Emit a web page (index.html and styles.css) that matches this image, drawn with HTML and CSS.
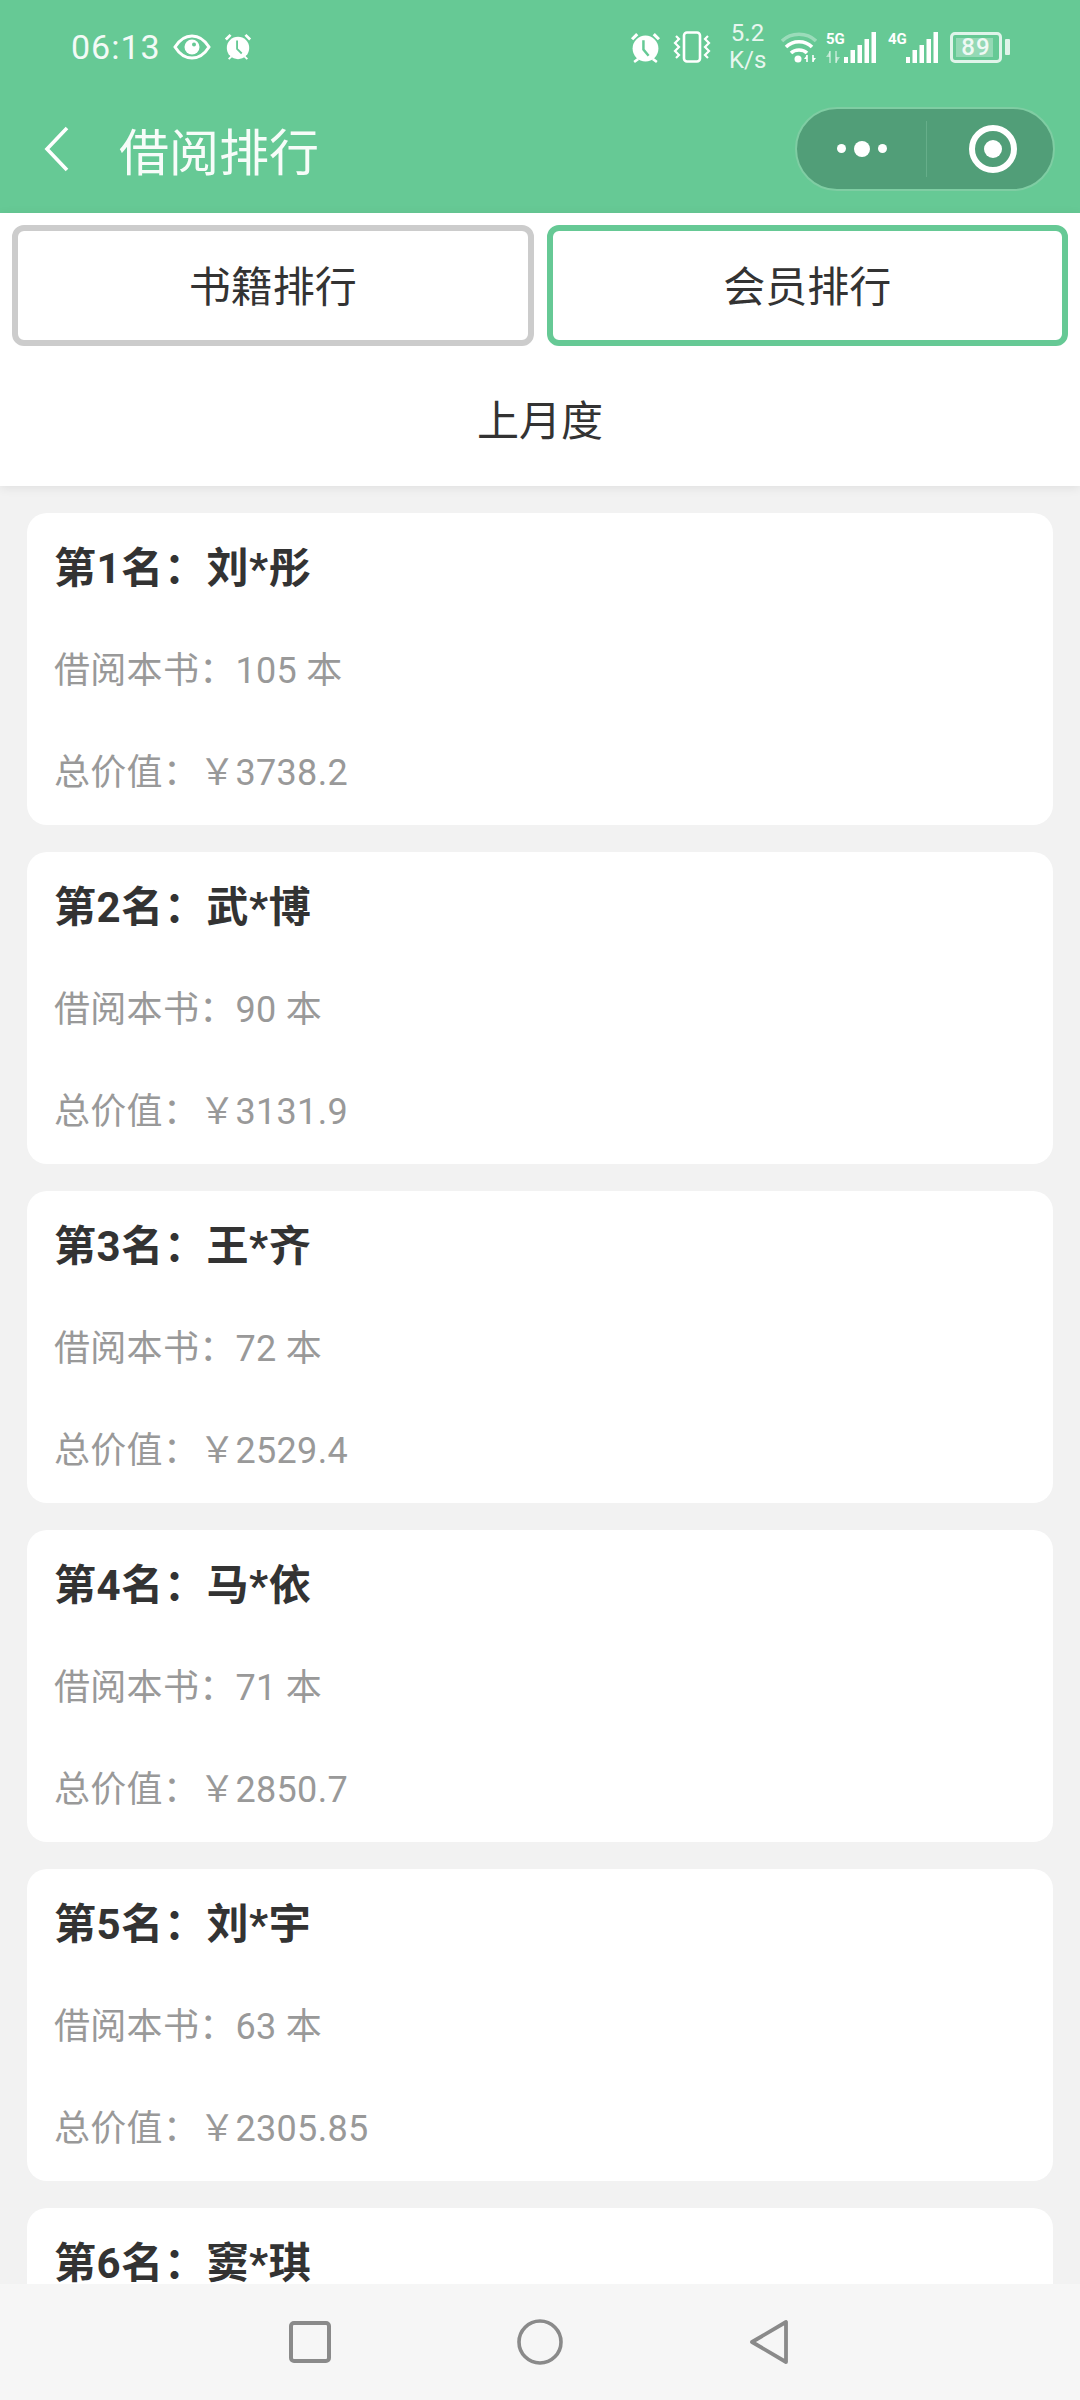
FILE: index.html
```html
<!DOCTYPE html>
<html lang="zh-CN">
<head>
    <meta charset="UTF-8">
    <meta name="viewport" content="width=device-width, initial-scale=1.0">
    <title>借阅排行</title>
    <link rel="stylesheet" href="styles.css">
</head>
<body>
    <div class="page">
        <!-- header -->
        <header class="header">
            <div class="status-bar">
                <span class="time">06:13</span>
                <svg class="ic-eye" viewBox="0 0 38 26" fill="none">
                    <path d="M2 13C7 5 13 2 19 2s12 3 17 11c-5 8-11 11-17 11S7 21 2 13z" stroke="#fff" stroke-width="3"/>
                    <circle cx="19" cy="13" r="7.5" fill="#fff"/>
                    <circle cx="21" cy="10.5" r="2" fill="#66c995"/>
                </svg>
                <svg class="ic-alarm-left" viewBox="0 0 30 30">
                    <circle cx="15" cy="16" r="12" fill="#fff"/>
                    <path d="M2 7l5-5M28 7l-5-5" stroke="#fff" stroke-width="3" fill="none"/>
                    <path d="M5 28l3-3M25 28l-3-3" stroke="#fff" stroke-width="2" fill="none"/>
                    <path d="M14 8v9l5 5" stroke="#66c995" stroke-width="2" fill="none"/>
                </svg>

                <div class="status-right">
                    <svg class="ic-alarm" viewBox="0 0 30 30">
                        <circle cx="15" cy="16" r="12.5" fill="#fff"/>
                        <path d="M2 7l5-5M28 7l-5-5" stroke="#fff" stroke-width="3" fill="none"/>
                        <path d="M4 29l4-3M26 29l-4-3" stroke="#fff" stroke-width="2.5" fill="none"/>
                        <path d="M13 8v9l5 6" stroke="#66c995" stroke-width="2.4" fill="none"/>
                    </svg>
                    <svg class="ic-vibrate" viewBox="0 0 38 32" fill="none" stroke="#fff">
                        <rect x="11" y="1.5" width="16" height="29" rx="3" stroke-width="2.6"/>
                        <path d="M3 5l3 3-4 4 4 4-4 4 4 4-3 3M35 5l-3 3 4 4-4 4 4 4-4 4 3 3" stroke-width="2.2"/>
                    </svg>
                    <div class="net-speed">5.2<br>K/s</div>
                    <svg class="ic-wifi" viewBox="0 0 36 32" fill="none">
                        <path d="M1 10C10 1 26 1 35 10" stroke="#fff" stroke-opacity=".35" stroke-width="3.5"/>
                        <path d="M5 16c7-7 19-7 26 0" stroke="#fff" stroke-width="3.5"/>
                        <path d="M10 22c4-4 12-4 16 0" stroke="#fff" stroke-width="3.5"/>
                        <circle cx="17" cy="28" r="3.5" fill="#fff"/>
                        <path d="M26 24v7M32 24v7" stroke="#fff" stroke-width="1.6"/>
                        <path d="M26 24l-3 4h3zM32 31l3-4h-3z" fill="#fff"/>
                    </svg>
                    <div class="signal signal-5g">
                        <div class="signal-info">
                            <span class="signal-label">5G</span>
                            <svg class="ic-arrows" viewBox="0 0 14 12">
                                <path d="M4 0v12M10 0v12" stroke="#fff" stroke-opacity=".5" stroke-width="1.8"/>
                                <path d="M4 0L0 6h4zM10 12l4-6h-4z" fill="#fff" fill-opacity=".5"/>
                            </svg>
                        </div>
                        <svg class="ic-bars" viewBox="0 0 32 32" fill="#fff">
                            <rect x="0" y="26" width="4" height="6"/>
                            <rect x="6.5" y="19" width="4.5" height="13"/>
                            <rect x="13.5" y="14" width="4.5" height="18"/>
                            <rect x="20.5" y="8" width="4.5" height="24"/>
                            <rect x="27.5" y="1" width="4.5" height="31"/>
                        </svg>
                    </div>
                    <div class="signal signal-4g">
                        <div class="signal-info">
                            <span class="signal-label">4G</span>
                        </div>
                        <svg class="ic-bars" viewBox="0 0 32 32" fill="#fff">
                            <rect x="0" y="26" width="4" height="6"/>
                            <rect x="6.5" y="19" width="4.5" height="13"/>
                            <rect x="13.5" y="14" width="4.5" height="18"/>
                            <rect x="20.5" y="8" width="4.5" height="24"/>
                            <rect x="27.5" y="1" width="4.5" height="31"/>
                        </svg>
                    </div>
                    <div class="battery">
                        <div class="battery-body">
                            <span class="battery-fill"></span>
                            <span class="battery-num">89</span>
                        </div>
                        <span class="battery-nub"></span>
                    </div>
                </div>
            </div>

            <div class="nav-bar">
                <svg class="ic-back" viewBox="0 0 26 46" fill="none">
                    <path d="M23 2L3 23l20 21" stroke="#fff" stroke-width="3.6"/>
                </svg>
                <h1 class="nav-title">借阅排行</h1>
                <div class="capsule">
                    <div class="capsule-left">
                        <span class="dot"></span>
                        <span class="dot dot-big"></span>
                        <span class="dot"></span>
                    </div>
                    <div class="capsule-right">
                        <span class="target"></span>
                    </div>
                </div>
            </div>
        </header>

        <!-- tabs -->
        <div class="top-panel">
            <div class="tabs">
                <div class="tab">书籍排行</div>
                <div class="tab tab-active">会员排行</div>
            </div>
            <div class="period">上月度</div>
        </div>

        <!-- list -->
        <main class="list">
            <div class="card">
                <div class="card-title">第1名：刘*彤</div>
                <div class="card-row">借阅本书：105 本</div>
                <div class="card-row">总价值：￥3738.2</div>
            </div>
            <div class="card">
                <div class="card-title">第2名：武*博</div>
                <div class="card-row">借阅本书：90 本</div>
                <div class="card-row">总价值：￥3131.9</div>
            </div>
            <div class="card">
                <div class="card-title">第3名：王*齐</div>
                <div class="card-row">借阅本书：72 本</div>
                <div class="card-row">总价值：￥2529.4</div>
            </div>
            <div class="card">
                <div class="card-title">第4名：马*依</div>
                <div class="card-row">借阅本书：71 本</div>
                <div class="card-row">总价值：￥2850.7</div>
            </div>
            <div class="card">
                <div class="card-title">第5名：刘*宇</div>
                <div class="card-row">借阅本书：63 本</div>
                <div class="card-row">总价值：￥2305.85</div>
            </div>
            <div class="card">
                <div class="card-title">第6名：窦*琪</div>
            </div>
        </main>

        <!-- android nav -->
        <footer class="sys-nav">
            <svg class="sys-icon" viewBox="0 0 46 46" fill="none">
                <rect x="4" y="4" width="38" height="38" rx="3" stroke="#8a8a8a" stroke-width="4"/>
            </svg>
            <svg class="sys-icon" viewBox="0 0 46 46" fill="none">
                <circle cx="23" cy="23" r="21" stroke="#8a8a8a" stroke-width="3.6"/>
            </svg>
            <svg class="sys-icon" viewBox="0 0 46 46" fill="none">
                <path d="M39 3v40L5 23z" stroke="#8a8a8a" stroke-width="3.8" stroke-linejoin="round"/>
            </svg>
        </footer>
    </div>
</body>
</html>
```

FILE: styles.css
```css
* {
    margin: 0;
    padding: 0;
    box-sizing: border-box;
}

html, body {
    width: 1080px;
    height: 2400px;
    overflow: hidden;
    font-family: "Roboto", "Noto Sans CJK SC", sans-serif;
}

.page {
    width: 1080px;
    height: 2400px;
    display: flex;
    flex-direction: column;
    background: #f2f2f2;
}

/* header */
.header {
    height: 213px;
    flex-shrink: 0;
    background: #66c995;
    color: #fff;
}

.status-bar {
    height: 84px;
    padding: 10px 0 0 71px;
    display: flex;
    align-items: center;
}

.time {
    font-size: 34px;
    letter-spacing: 1px;
    opacity: .92;
}

.ic-eye {
    width: 38px;
    height: 26px;
    margin-left: 12px;
}

.ic-alarm-left {
    width: 28px;
    height: 28px;
    margin-left: 13px;
}

.status-right {
    margin-left: auto;
    padding-right: 70px;
    display: flex;
    align-items: center;
}

.ic-alarm {
    width: 31px;
    height: 31px;
}

.ic-vibrate {
    width: 38px;
    height: 32px;
    margin-left: 12px;
}

.net-speed {
    width: 37px;
    margin-left: 18px;
    font-size: 24px;
    line-height: 27px;
    text-align: center;
    opacity: .85;
}

.ic-wifi {
    width: 36px;
    height: 32px;
    margin-left: 15px;
}

.signal {
    display: flex;
    align-items: flex-end;
    height: 32px;
}

.signal-5g {
    margin-left: 9px;
}

.signal-4g {
    margin-left: 12px;
}

.signal-info {
    width: 18px;
    height: 32px;
    display: flex;
    flex-direction: column;
    justify-content: space-between;
}

.signal-label {
    font-size: 15px;
    line-height: 16px;
    font-weight: 700;
}

.ic-arrows {
    width: 14px;
    height: 12px;
}

.ic-bars {
    width: 32px;
    height: 32px;
}

.battery {
    margin-left: 12px;
    display: flex;
    align-items: center;
}

.battery-body {
    position: relative;
    width: 52px;
    height: 31px;
    border: 3px solid rgba(255, 255, 255, .8);
    border-radius: 5px;
    display: flex;
    align-items: center;
    justify-content: center;
}

.battery-fill {
    position: absolute;
    left: 3px;
    top: 3px;
    bottom: 3px;
    width: 37px;
    background: rgba(255, 255, 255, .3);
}

.battery-num {
    position: relative;
    font-size: 24px;
    font-weight: 500;
    letter-spacing: 1px;
    opacity: .85;
}

.battery-nub {
    width: 5px;
    height: 16px;
    margin-left: 3px;
    background: rgba(255, 255, 255, .8);
    border-radius: 1px;
}

.nav-bar {
    height: 129px;
    padding: 0 25px 0 44px;
    display: flex;
    align-items: center;
}

.ic-back {
    width: 26px;
    height: 46px;
}

.nav-title {
    margin-left: 49px;
    font-size: 50px;
    font-weight: 400;
    opacity: .95;
}

.capsule {
    margin-left: auto;
    width: 260px;
    height: 84px;
    border-radius: 42px;
    background: #519e78;
    border: 2px solid #7fcda3;
    display: flex;
    align-items: center;
}

.capsule-left {
    width: 130px;
    height: 56px;
    border-right: 1px solid #66ae8a;
    display: flex;
    align-items: center;
    justify-content: center;
    gap: 8px;
}

.dot {
    width: 9px;
    height: 9px;
    border-radius: 50%;
    background: #fff;
}

.dot-big {
    width: 16px;
    height: 16px;
}

.capsule-right {
    flex: 1;
    padding-left: 6px;
    display: flex;
    justify-content: center;
}

.target {
    width: 48px;
    height: 48px;
    border-radius: 50%;
    border: 6px solid #fff;
    display: flex;
    align-items: center;
    justify-content: center;
}

.target::after {
    content: "";
    width: 18px;
    height: 18px;
    border-radius: 50%;
    background: #fff;
}

/* tabs */
.top-panel {
    height: 273px;
    flex-shrink: 0;
    background: #fff;
    box-shadow: 0 2px 10px rgba(0, 0, 0, .08);
    position: relative;
}

.tabs {
    padding: 12px 12px 0;
    display: flex;
    gap: 13px;
}

.tab {
    flex: 1;
    height: 121px;
    padding-bottom: 5px;
    border: 6px solid #cccccc;
    border-radius: 12px;
    display: flex;
    align-items: center;
    justify-content: center;
    font-size: 42px;
    color: #333;
}

.tab-active {
    border-color: #66c995;
}

.period {
    height: 140px;
    padding-top: 3px;
    display: flex;
    align-items: center;
    justify-content: center;
    font-size: 42px;
    color: #333;
}

/* list */
.list {
    flex: 1;
    min-height: 0;
    overflow: hidden;
    padding: 27px 27px 0;
    display: flex;
    flex-direction: column;
    gap: 27px;
}

.card {
    flex-shrink: 0;
    height: 312px;
    padding: 29px 27px 27px;
    background: #fff;
    border-radius: 20px;
}

.card-title {
    font-size: 42px;
    line-height: 54px;
    font-weight: 700;
    letter-spacing: .6px;
    color: #333;
}

.card-row {
    margin-top: 48px;
    font-size: 36px;
    line-height: 54px;
    letter-spacing: .3px;
    color: #999;
}

/* android nav */
.sys-nav {
    height: 116px;
    flex-shrink: 0;
    background: #f6f6f6;
    display: flex;
    align-items: center;
    justify-content: center;
    gap: 184px;
    position: relative;
}

.sys-icon {
    width: 46px;
    height: 46px;
}
```
